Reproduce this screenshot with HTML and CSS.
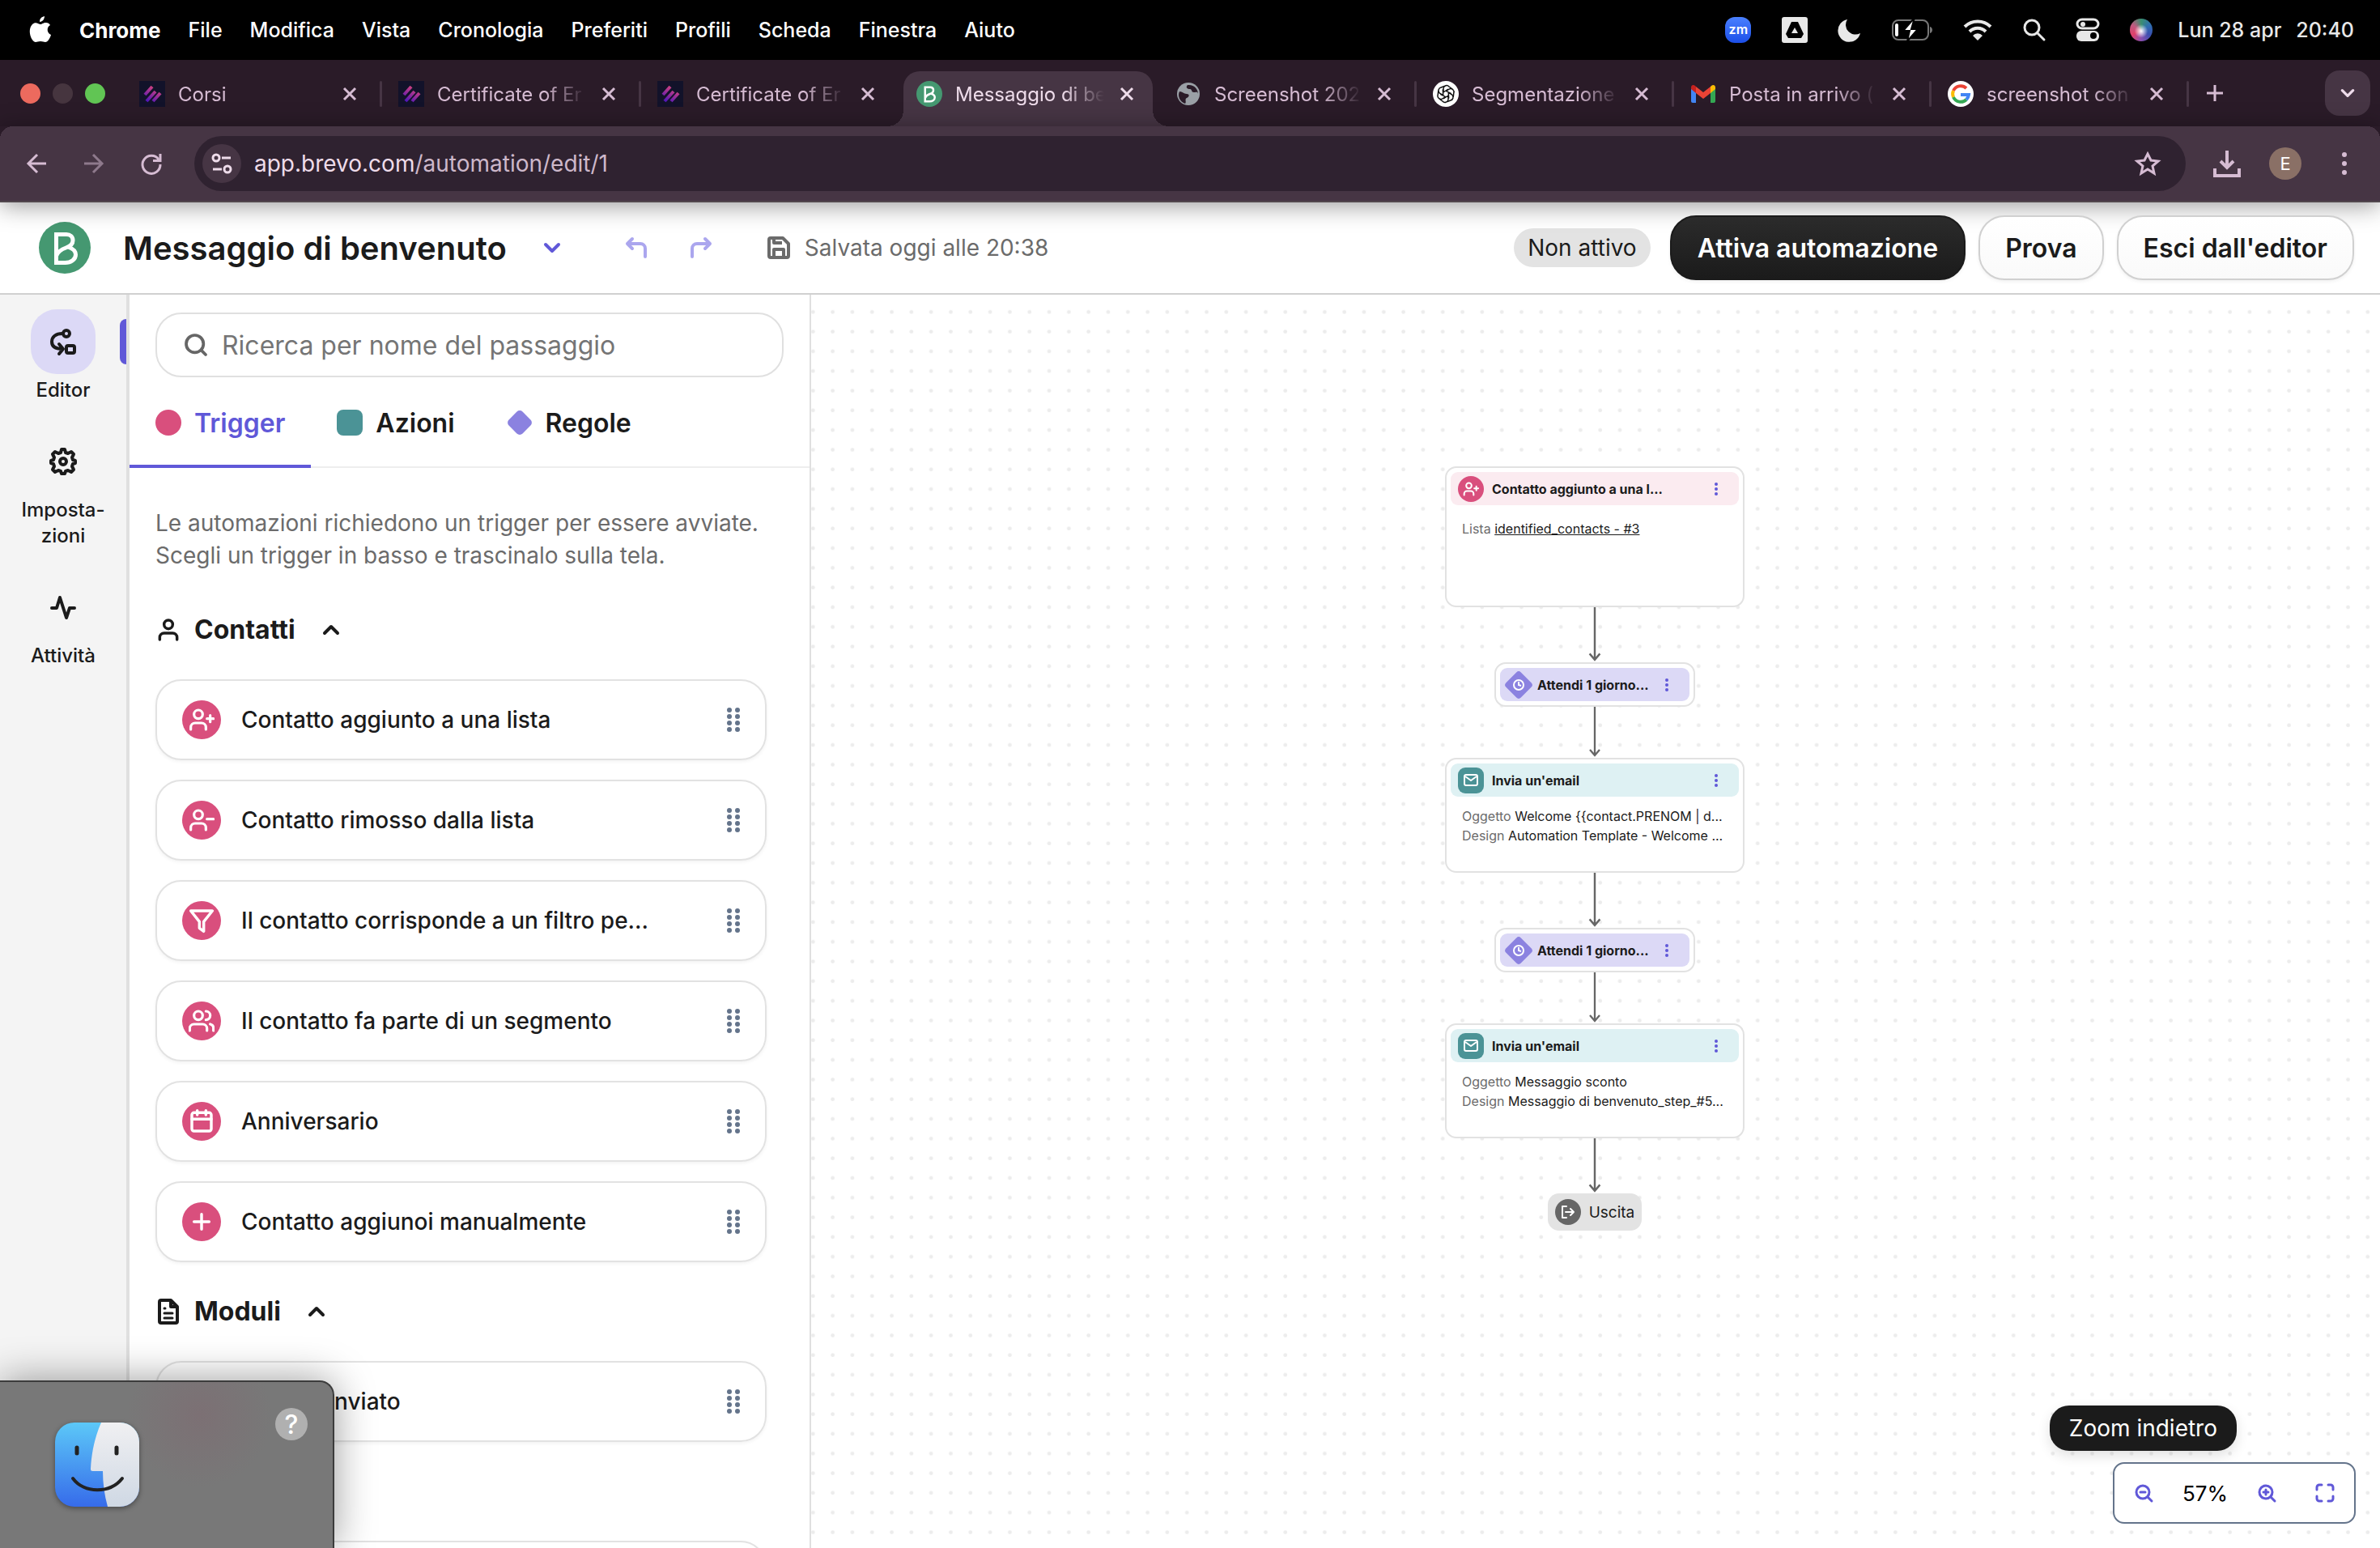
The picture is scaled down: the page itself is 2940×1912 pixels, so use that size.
FILE: index.html
```html
<!DOCTYPE html>
<html lang="it">
<head>
<meta charset="utf-8">
<title>Messaggio di benvenuto</title>
<link rel="stylesheet" href="styles.css">
</head>
<body>
<svg class="defs" aria-hidden="true">
  <defs>
    <linearGradient id="streak" gradientUnits="userSpaceOnUse" x1="7" y1="26" x2="18" y2="6"><stop offset="0" stop-color="#4210c0"/><stop offset="1" stop-color="#d8457c"/></linearGradient>
    <symbol id="i-streak" viewBox="0 0 32 32"><rect width="32" height="32" fill="#12122a"/><g fill="none" stroke="url(#streak)" stroke-width="4"><path d="M7 17 16 7"/><path d="M9 25 20 13"/><path d="M17 25 26 15"/></g></symbol>
    <symbol id="i-brevo" viewBox="0 0 64 64"><circle cx="32" cy="32" r="32" fill="#459871"/><path d="M21.500 50.500V15.500H34C39 15.500 42 18.500 42 23C42 28 38 30.500 33.500 32C29 33.500 24 36 21.500 42M36 31C42 33 45.500 36 45.500 40.500C45.500 46.500 39.500 50.500 32.500 50.500H19" fill="none" stroke="#fff" stroke-width="5"/></symbol>
    <symbol id="i-close" viewBox="0 0 20 20"><path d="M3 3 17 17M17 3 3 17" stroke="currentColor" stroke-width="3" fill="none"/></symbol>
    <symbol id="i-chev" viewBox="0 0 24 24"><path d="M4 8l8 8 8-8" fill="none" stroke="currentColor" stroke-width="4" stroke-linecap="round" stroke-linejoin="round"/></symbol>
    <symbol id="i-user" viewBox="0 0 24 24"><g fill="none" stroke="currentColor" stroke-width="2.600" stroke-linecap="round" stroke-linejoin="round"><circle cx="12" cy="7" r="4"/><path d="M4 21v-2a4 4 0 0 1 4-4h8a4 4 0 0 1 4 4v2"/></g></symbol>
    <symbol id="i-userplus" viewBox="0 0 24 24"><g fill="none" stroke="currentColor" stroke-width="2.400" stroke-linecap="round" stroke-linejoin="round"><circle cx="9" cy="7" r="4"/><path d="M2 21v-2a4 4 0 0 1 4-4h6a4 4 0 0 1 4 4v2M20 8v6M17 11h6"/></g></symbol>
    <symbol id="i-userminus" viewBox="0 0 24 24"><g fill="none" stroke="currentColor" stroke-width="2.400" stroke-linecap="round" stroke-linejoin="round"><circle cx="9" cy="7" r="4"/><path d="M2 21v-2a4 4 0 0 1 4-4h6a4 4 0 0 1 4 4v2M17 11h6"/></g></symbol>
    <symbol id="i-users" viewBox="0 0 24 24"><g fill="none" stroke="currentColor" stroke-width="2.400" stroke-linecap="round" stroke-linejoin="round"><circle cx="9" cy="7" r="4"/><path d="M1 21v-2a4 4 0 0 1 4-4h8a4 4 0 0 1 4 4v2M23 21v-2a4 4 0 0 0-3-4M16 3a4 4 0 0 1 0 8"/></g></symbol>
    <symbol id="i-filter" viewBox="0 0 24 24"><path d="M22 3H2l8 10v6l4 3v-9z" fill="none" stroke="currentColor" stroke-width="2.600" stroke-linejoin="round"/></symbol>
    <symbol id="i-cal" viewBox="0 0 24 24"><g fill="none" stroke="currentColor" stroke-width="2.600" stroke-linecap="round" stroke-linejoin="round"><rect x="3" y="4" width="18" height="17" rx="2"/><path d="M8 2v4M16 2v4M3 10h18"/></g></symbol>
    <symbol id="i-plus" viewBox="0 0 24 24"><path d="M12 5v14M5 12h14" fill="none" stroke="currentColor" stroke-width="2.600" stroke-linecap="round"/></symbol>
    <symbol id="i-grip" viewBox="0 0 16 32"><g fill="#64748b"><circle cx="3" cy="4" r="3"/><circle cx="13" cy="4" r="3"/><circle cx="3" cy="12" r="3"/><circle cx="13" cy="12" r="3"/><circle cx="3" cy="20" r="3"/><circle cx="13" cy="20" r="3"/><circle cx="3" cy="28" r="3"/><circle cx="13" cy="28" r="3"/></g></symbol>
    <symbol id="i-mail" viewBox="0 0 20 20"><g fill="none" stroke="#fff" stroke-width="2" stroke-linejoin="round"><rect x="2" y="3" width="16" height="13" rx="2"/><path d="M3 5l7 5 7-5"/></g></symbol>
    <symbol id="i-dots" viewBox="0 0 6 18"><g fill="currentColor"><circle cx="3" cy="3" r="2"/><circle cx="3" cy="9" r="2"/><circle cx="3" cy="15" r="2"/></g></symbol>
    <symbol id="i-wait" viewBox="0 0 36 36"><rect x="5" y="5" width="26" height="26" rx="4" fill="#8b82e0" transform="rotate(45 18 18)"/><circle cx="18" cy="18" r="6" fill="none" stroke="#fff" stroke-width="2"/><path d="M18 14v4l3 1" fill="none" stroke="#fff" stroke-width="2"/></symbol>
    <symbol id="i-arrow" viewBox="0 0 16 64" preserveAspectRatio="xMidYMax slice"><path d="M8-10V61M2 54l6 7 6-7" fill="none" stroke="#666" stroke-width="2.300"/></symbol>
    <symbol id="i-search" viewBox="0 0 24 24"><g fill="none" stroke="currentColor" stroke-width="2.800" stroke-linecap="round"><circle cx="11" cy="11" r="8"/><path d="M21 21l-4-4"/></g></symbol>
  </defs>
</svg>

<nav class="menubar" aria-label="Menu">
  <svg class="apple" width="28" height="34" viewBox="0 0 28 34"><path d="M19 0c0 3-2 7-6 7 0-4 2-6 6-7zM14 10c2 0 3-2 7-2 2 0 4 1 5 3-5 3-4 10 1 12-1 4-4 9-7 9-2 0-3-1-6-1s-4 1-6 1C3 32-3 17 4 10c4-4 8 0 10 0z" fill="#fff"/></svg>
  <span class="app">Chrome</span><span>File</span><span>Modifica</span><span>Vista</span><span>Cronologia</span><span>Preferiti</span><span>Profili</span><span>Scheda</span><span>Finestra</span><span>Aiuto</span>
  <div class="status">
    <span class="zm">zm</span>
    <svg width="32" height="32" viewBox="0 0 32 32"><rect width="32" height="32" rx="3" fill="#e8e8e8"/><path d="M12 6h8l7 15-3 5H8l-3-5z" fill="#000"/><path d="M16 13l4 7h-8z" fill="#e8e8e8"/></svg>
    <svg width="28" height="28" viewBox="0 0 28 28"><path d="M11 1a12 12 0 0 0 16 17A14 14 0 1 1 11 1z" fill="#e8e8e8"/></svg>
    <svg width="50" height="26" viewBox="0 0 50 26"><rect x="1" y="1" width="44" height="24" rx="7" fill="none" stroke="#777" stroke-width="2"/><rect x="4" y="5" width="4" height="16" rx="2" fill="#fff"/><path d="M47 9c4 1 4 7 0 8z" fill="#777"/><path d="M28-2 14 14h8l-3 13 13-15h-8z" fill="#fff" stroke="#000" stroke-width="2"/></svg>
    <svg width="36" height="26" viewBox="0 0 36 26"><g fill="none" stroke="#e8e8e8" stroke-width="4"><path d="M2 9a23 23 0 0 1 32 0M8 15a14 14 0 0 1 20 0"/></g><path d="M12 20a8 8 0 0 1 12 0l-6 6z" fill="#e8e8e8"/></svg>
    <svg width="28" height="28" viewBox="0 0 28 28"><circle cx="11" cy="11" r="9" fill="none" stroke="#e8e8e8" stroke-width="3"/><path d="M18 18l8 8" stroke="#e8e8e8" stroke-width="3" stroke-linecap="round"/></svg>
    <svg width="28" height="28" viewBox="0 0 28 28"><rect x="1" y="1" width="26" height="11" rx="6" fill="none" stroke="#e8e8e8" stroke-width="3"/><circle cx="8" cy="7" r="3" fill="#e8e8e8"/><rect y="15" width="28" height="13" rx="6" fill="#e8e8e8"/><circle cx="21" cy="21" r="4" fill="#000"/></svg>
    <span class="siri"></span>
    <span class="clock"><span>Lun 28 apr</span><span>20:40</span></span>
  </div>
</nav>

<div class="tabstrip">
  <div class="lights"><i class="red"></i><i class="off"></i><i class="green"></i></div>
  <div class="tabs">
    <div class="tab"><svg class="fav"><use href="#i-streak"/></svg><span>Corsi</span><button aria-label="Chiudi"><svg><use href="#i-close"/></svg></button></div>
    <div class="tab"><svg class="fav"><use href="#i-streak"/></svg><span>Certificate of Er</span><button aria-label="Chiudi"><svg><use href="#i-close"/></svg></button></div>
    <div class="tab bare"><svg class="fav"><use href="#i-streak"/></svg><span>Certificate of Er</span><button aria-label="Chiudi"><svg><use href="#i-close"/></svg></button></div>
    <div class="tab active"><svg class="fav"><use href="#i-brevo"/></svg><span>Messaggio di be</span><button aria-label="Chiudi"><svg><use href="#i-close"/></svg></button></div>
    <div class="tab"><svg class="fav" viewBox="0 0 32 32"><circle cx="16" cy="16" r="14" fill="#9aa0a6"/><path d="M5 13c4 0 5 3 9 3s3 4 0 5 0 5-2 7C6 26 2 19 5 13zM15 5c-3 3 0 5 3 5s1 4 5 4 4-1 5 2c0-6-5-12-13-11z" fill="#2a1b28"/></svg><span>Screenshot 202</span><button aria-label="Chiudi"><svg><use href="#i-close"/></svg></button></div>
    <div class="tab"><svg class="fav" viewBox="0 0 32 32"><circle cx="16" cy="16" r="16" fill="#fff"/><g fill="none" stroke="#111" stroke-width="1.500"><path id="petal" d="M13 14V9a4 4 0 0 1 7-2l4 3M13 14l6-4"/><use href="#petal" transform="rotate(60 16 16)"/><use href="#petal" transform="rotate(120 16 16)"/><use href="#petal" transform="rotate(180 16 16)"/><use href="#petal" transform="rotate(240 16 16)"/><use href="#petal" transform="rotate(300 16 16)"/></g></svg><span>Segmentazione</span><button aria-label="Chiudi"><svg><use href="#i-close"/></svg></button></div>
    <div class="tab"><svg class="fav" viewBox="0 0 32 32"><path d="M1 8v17a2 2 0 0 0 2 2h4V13z" fill="#4285f4"/><path d="M31 8v17a2 2 0 0 1-2 2h-4V13z" fill="#34a853"/><path d="M25 7v8l6-5V8c0-3-3-4-5-2z" fill="#fbbc04"/><path d="M7 15V7l9 7 9-7v8l-9 7z" fill="#ea4335"/><path d="M1 8v2l6 5V7L6 6C4 4 1 5 1 8z" fill="#c5221f"/></svg><span>Posta in arrivo (</span><button aria-label="Chiudi"><svg><use href="#i-close"/></svg></button></div>
    <div class="tab"><svg class="fav" viewBox="0 0 32 32"><circle cx="16" cy="16" r="16" fill="#fff"/><g fill="none" stroke-width="4"><path d="M23 9a10 10 0 0 0-16 3" stroke="#ea4335"/><path d="M7 12a10 10 0 0 0 0 8" stroke="#fbbc04"/><path d="M7 20a10 10 0 0 0 16 3" stroke="#34a853"/><path d="M23 23a10 10 0 0 0 3-6H16" stroke="#4285f4"/></g></svg><span>screenshot con</span><button aria-label="Chiudi"><svg><use href="#i-close"/></svg></button></div>
  </div>
  <button class="newtab" aria-label="Nuova scheda"><svg width="24" height="24" viewBox="0 0 24 24"><path d="M12 2v20M2 12h20" stroke="currentColor" stroke-width="3"/></svg></button>
  <button class="tabsearch" aria-label="Cerca schede"><svg width="20" height="20"><use href="#i-chev"/></svg></button>
</div>

<div class="toolbar">
  <button aria-label="Indietro"><svg width="24" height="24" viewBox="0 0 24 24"><path d="M24 12H2M13 1 2 12l11 11" fill="none" stroke="currentColor" stroke-width="3"/></svg></button>
  <button class="dim" aria-label="Avanti"><svg width="24" height="24" viewBox="0 0 24 24"><path d="M0 12h22M11 1l11 11-11 11" fill="none" stroke="currentColor" stroke-width="3"/></svg></button>
  <button aria-label="Ricarica"><svg width="26" height="26" viewBox="0 0 26 26"><path d="M22 8A11 11 0 1 0 24 14" fill="none" stroke="currentColor" stroke-width="3"/><path d="M24 1v8.500h-9" fill="none" stroke="currentColor" stroke-width="3"/></svg></button>
  <div class="omnibox">
    <span class="chip"><svg width="26" height="26" viewBox="0 0 26 26"><g fill="none" stroke="currentColor" stroke-width="3"><circle cx="6" cy="6" r="4"/><path d="M13 6h11M2 20h11"/><circle cx="20" cy="20" r="4"/></g></svg></span>
    <span class="url">app.brevo.com<span>/automation/edit/1</span></span>
    <svg class="star" width="30" height="30" viewBox="0 0 30 30"><path d="M15 3l4 8 9 1-7 6 2 9-8-5-8 5 2-9-7-6 9-1z" fill="none" stroke="currentColor" stroke-width="3"/></svg>
  </div>
  <button class="dl" aria-label="Download"><svg width="34" height="34" viewBox="0 0 34 34"><path d="M17 1v20M9 14l8 8 8-8M2 23v9h30v-9" fill="none" stroke="currentColor" stroke-width="4"/></svg></button>
  <span class="avatar">E</span>
  <button class="kebab" aria-label="Menu"><svg width="8" height="30" viewBox="0 0 8 30"><g fill="currentColor"><circle cx="4" cy="4" r="3"/><circle cx="4" cy="15" r="3"/><circle cx="4" cy="26" r="3"/></g></svg></button>
</div>

<header class="pagehead">
  <svg class="logo"><use href="#i-brevo"/></svg>
  <h1>Messaggio di benvenuto</h1>
  <button class="more" aria-label="Altro"><svg width="24" height="24"><use href="#i-chev"/></svg></button>
  <button class="undo" aria-label="Annulla"><svg width="28" height="28" viewBox="0 0 28 28"><path d="M9 3 3 9l6 6M3 9h16a6 6 0 0 1 6 6v10" fill="none" stroke="currentColor" stroke-width="4" stroke-linecap="round" stroke-linejoin="round"/></svg></button>
  <button class="redo" aria-label="Ripeti"><svg width="28" height="28" viewBox="0 0 28 28"><path d="M19 3l6 6-6 6M25 9H9a6 6 0 0 0-6 6v10" fill="none" stroke="currentColor" stroke-width="4" stroke-linecap="round" stroke-linejoin="round"/></svg></button>
  <p class="saved"><svg width="28" height="28" viewBox="0 0 28 28"><g fill="none" stroke="currentColor" stroke-width="4" stroke-linejoin="round"><path d="M2 4a2 2 0 0 1 2-2h15l7 7v15a2 2 0 0 1-2 2H4a2 2 0 0 1-2-2z"/><path d="M8 26V16h12v10M8 3v5h10"/></g></svg>Salvata oggi alle 20:38</p>
  <span class="badge">Non attivo</span>
  <button class="btn dark">Attiva automazione</button>
  <button class="btn">Prova</button>
  <button class="btn">Esci dall'editor</button>
</header>

<main class="workspace">
  <nav class="rail" aria-label="Sezioni">
    <a class="on" href="#editor"><span class="tile"><svg width="34" height="34" viewBox="0 0 34 34"><g fill="none" stroke="currentColor" stroke-width="4" stroke-linecap="round" stroke-linejoin="round"><circle cx="21" cy="7" r="4"/><path d="M16 7C8 7 3 11 3 17s4 9 13 9M12 20l5 6-5 6"/><rect x="21" y="22" width="10" height="9" rx="2"/></g></svg></span>Editor</a>
    <a href="#impostazioni"><span class="tile"><svg width="34" height="34" viewBox="0 0 34 34"><g fill="none" stroke="currentColor" stroke-width="4" stroke-linejoin="round"><path d="M14 6l1-4h4l1 4 3 1 4-2 3 3-2 4 1 3 3 1v3l-3 1-1 3 2 4-3 3-4-2-3 1-1 3h-4l-1-3-3-1-4 2-3-3 2-4-1-3-3-1v-3l3-1 1-3-2-4 3-3 4 2z"/><circle cx="17" cy="17" r="4"/></g></svg></span>Imposta-<br>zioni</a>
    <a href="#attivita"><span class="tile"><svg width="32" height="32" viewBox="0 0 32 32"><path d="M2 17h6l4-13 8 25 4-12h6" fill="none" stroke="currentColor" stroke-width="4" stroke-linecap="round" stroke-linejoin="round"/></svg></span>Attività</a>
  </nav>

  <section class="panel">
    <label class="search"><svg width="32" height="32"><use href="#i-search"/></svg><input type="text" placeholder="Ricerca per nome del passaggio" aria-label="Ricerca per nome del passaggio"></label>
    <div class="kinds">
      <button class="on"><i class="dot"></i>Trigger</button>
      <button><i class="sq"></i>Azioni</button>
      <button><svg class="dia" viewBox="0 0 32 32"><rect x="4" y="4" width="24" height="24" rx="5" fill="#8b82e0" transform="rotate(45 16 16)"/></svg>Regole</button>
    </div>
    <div class="list">
      <p class="hint">Le automazioni richiedono un trigger per essere avviate. Scegli un trigger in basso e trascinalo sulla tela.</p>
      <h2><svg width="32" height="32"><use href="#i-user"/></svg>Contatti<svg class="up" width="24" height="24"><use href="#i-chev"/></svg></h2>
      <div class="cards">
        <div class="card"><span class="ico"><svg><use href="#i-userplus"/></svg></span><span class="name">Contatto aggiunto a una lista</span><svg class="grip"><use href="#i-grip"/></svg></div>
        <div class="card"><span class="ico"><svg><use href="#i-userminus"/></svg></span><span class="name">Contatto rimosso dalla lista</span><svg class="grip"><use href="#i-grip"/></svg></div>
        <div class="card"><span class="ico"><svg><use href="#i-filter"/></svg></span><span class="name">Il contatto corrisponde a un filtro pe...</span><svg class="grip"><use href="#i-grip"/></svg></div>
        <div class="card"><span class="ico"><svg><use href="#i-users"/></svg></span><span class="name">Il contatto fa parte di un segmento</span><svg class="grip"><use href="#i-grip"/></svg></div>
        <div class="card"><span class="ico"><svg><use href="#i-cal"/></svg></span><span class="name">Anniversario</span><svg class="grip"><use href="#i-grip"/></svg></div>
        <div class="card"><span class="ico"><svg><use href="#i-plus"/></svg></span><span class="name">Contatto aggiunoi manualmente</span><svg class="grip"><use href="#i-grip"/></svg></div>
      </div>
      <h2><svg width="32" height="32" viewBox="0 0 32 32"><g fill="none" stroke="currentColor" stroke-width="4" stroke-linejoin="round" stroke-linecap="round"><path d="M5 4a2 2 0 0 1 2-2h12l8 8v18a2 2 0 0 1-2 2H7a2 2 0 0 1-2-2zM19 3v7h7"/><path d="M11 12h1M11 18h10M11 24h10" stroke-width="3"/></g></svg>Moduli<svg class="up" width="24" height="24"><use href="#i-chev"/></svg></h2>
      <div class="cards spaced">
        <div class="card"><span class="ico"></span><span class="name">Modulo inviato</span><svg class="grip"><use href="#i-grip"/></svg></div>
        <div class="card"></div>
      </div>
    </div>
  </section>

  <section class="canvas">
    <svg class="grid" aria-hidden="true"><defs><pattern id="grid" x="-10" y="9" width="24.31" height="24.31" patternUnits="userSpaceOnUse"><circle cx="12.300" cy="12.300" r="2.400" fill="#ececec"/></pattern></defs><rect width="100%" height="100%" fill="url(#grid)"/></svg>
    <div class="flow">
      <article class="node tall">
        <div class="bar pink"><span class="mark round"><svg><use href="#i-userplus"/></svg></span><b>Contatto aggiunto a una l...</b><button aria-label="Opzioni"><svg><use href="#i-dots"/></svg></button></div>
        <p><span>Lista</span> <a href="#lista">identified_contacts - #3</a></p>
      </article>
      <svg class="arrow"><use href="#i-arrow"/></svg>
      <article class="wait"><div class="bar lilac"><svg class="clock-mark"><use href="#i-wait"/></svg><b>Attendi 1 giorno...</b><button aria-label="Opzioni"><svg><use href="#i-dots"/></svg></button></div></article>
      <svg class="arrow short"><use href="#i-arrow"/></svg>
      <article class="node">
        <div class="bar teal"><span class="mark"><svg><use href="#i-mail"/></svg></span><b>Invia un'email</b><button aria-label="Opzioni"><svg><use href="#i-dots"/></svg></button></div>
        <p><span>Oggetto</span> Welcome {{contact.PRENOM | d...<br><span>Design</span> Automation Template - Welcome ...</p>
      </article>
      <svg class="arrow"><use href="#i-arrow"/></svg>
      <article class="wait"><div class="bar lilac"><svg class="clock-mark"><use href="#i-wait"/></svg><b>Attendi 1 giorno...</b><button aria-label="Opzioni"><svg><use href="#i-dots"/></svg></button></div></article>
      <svg class="arrow short"><use href="#i-arrow"/></svg>
      <article class="node">
        <div class="bar teal"><span class="mark"><svg><use href="#i-mail"/></svg></span><b>Invia un'email</b><button aria-label="Opzioni"><svg><use href="#i-dots"/></svg></button></div>
        <p><span>Oggetto</span> Messaggio sconto<br><span>Design</span> Messaggio di benvenuto_step_#5...</p>
      </article>
      <svg class="arrow"><use href="#i-arrow"/></svg>
      <div class="exit"><svg width="32" height="32" viewBox="0 0 32 32"><circle cx="16" cy="16" r="16" fill="#666"/><path d="M14 9H9v14h5M13 16h10M19 12l4 4-4 4" fill="none" stroke="#fff" stroke-width="2" stroke-linecap="round" stroke-linejoin="round"/></svg>Uscita</div>
    </div>
    <div class="zoom">
      <div class="tip" role="tooltip">Zoom indietro</div>
      <div class="controls">
        <button aria-label="Zoom indietro"><svg width="24" height="24" viewBox="0 0 24 24"><g fill="none" stroke="currentColor" stroke-width="3" stroke-linecap="round"><circle cx="11" cy="11" r="8"/><path d="M17 17l5 5M8 11h6"/></g></svg></button>
        <span>57%</span>
        <button aria-label="Zoom avanti"><svg width="24" height="24" viewBox="0 0 24 24"><g fill="none" stroke="currentColor" stroke-width="3" stroke-linecap="round"><circle cx="11" cy="11" r="8"/><path d="M17 17l5 5M8 11h6M11 8v6"/></g></svg></button>
        <button class="fit" aria-label="Adatta"><svg width="24" height="24" viewBox="0 0 24 24"><path d="M2 8V5a3 3 0 0 1 3-3h3M16 2h3a3 3 0 0 1 3 3v3M22 16v3a3 3 0 0 1-3 3h-3M8 22H5a3 3 0 0 1-3-3v-3" fill="none" stroke="currentColor" stroke-width="3" stroke-linecap="round"/></svg></button>
      </div>
    </div>
  </section>
</main>

<aside class="dock">
  <svg class="finder" viewBox="0 0 104 104"><defs><linearGradient id="fb" x1="0" y1="0" x2="0" y2="1"><stop offset="0" stop-color="#5cc8f8"/><stop offset="1" stop-color="#366bea"/></linearGradient><linearGradient id="fw" x1="0" y1="0" x2="0" y2="1"><stop offset="0" stop-color="#f0f0f2"/><stop offset="1" stop-color="#cfd8e4"/></linearGradient><clipPath id="fc"><rect width="104" height="104" rx="24"/></clipPath></defs><g clip-path="url(#fc)"><rect width="104" height="104" fill="url(#fb)"/><path d="M57 0C49 18 45 38 44 57c0 3 1 3 4 3h11c0 15 2 30 6 44h39V0z" fill="url(#fw)"/></g><path d="M27 31v7M76 31v7" stroke="#222" stroke-width="5" stroke-linecap="round"/><path d="M22 69c14 19 46 19 61 0" fill="none" stroke="#222" stroke-width="4" stroke-linecap="round"/></svg>
  <button aria-label="Aiuto">?</button>
</aside>
</body>
</html>
```
FILE: styles.css
```css
* { box-sizing: border-box; }
html, body { height: 100%; }
body {
  margin: 0;
  display: flex;
  flex-direction: column;
  position: relative;
  overflow: hidden;
  font-family: Inter, "Liberation Sans", sans-serif;
  font-size: 28px;
  color: #1b1b1b;
  background: #fff;
}
button { font: inherit; color: inherit; background: none; border: 0; padding: 0; display: flex; align-items: center; justify-content: center; flex: none; }
svg { flex: none; display: block; overflow: visible; }
h1, h2, p { margin: 0; }
a { color: inherit; }
.defs { position: absolute; width: 0; height: 0; }

/* System menu bar */
.menubar { flex: none; height: 74px; background: #000; color: #fff; display: flex; align-items: center; gap: 34px; padding: 0 32px 0 36px; font-size: 25px; font-weight: 500; white-space: nowrap; }
.menubar .app { font-size: 26px; font-weight: 700; }
.status { margin-left: auto; display: flex; align-items: center; gap: 38px; color: #e8e8e8; }
.zm { width: 32px; height: 32px; border-radius: 12px; background: linear-gradient(#4a80ff, #1c4fe8); color: #fff; font-size: 16px; line-height: 30px; font-weight: 600; text-align: center; }
.siri { width: 28px; height: 28px; border-radius: 50%; background: radial-gradient(circle at 50% 55%, #fff 0, transparent 40%), conic-gradient(#3a8f70, #2f6fb0, #3a4fb0, #8a50b0, #e0406a, #c05a80, #3a8f70); }
.clock { display: flex; gap: 18px; margin-left: -7px; }

/* Browser tab strip */
.tabstrip { flex: none; height: 82px; background: #2a1b28; color: #d6bcd3; display: flex; align-items: center; padding: 0 12px 0 25px; font-size: 24px; }
.lights { display: flex; gap: 15px; width: 127px; }
.lights i { width: 25px; height: 25px; border-radius: 50%; }
.red { background: #ec6a5e; }
.off { background: #46353f; }
.green { background: #61c554; }
.tabs { flex: 1; display: grid; grid-template-columns: repeat(4, 320fr) repeat(4, 318fr); align-self: stretch; padding-top: 14px; }
.tab { display: flex; align-items: center; min-width: 0; height: 56px; padding: 0 30px 0 20px; position: relative; }
.fav { width: 32px; height: 32px; margin-right: 16px; }
.tab > span { flex: 1; min-width: 0; white-space: nowrap; margin-right: 18px; mask-image: linear-gradient(to right, #000 72%, transparent); }
.tab svg:not(.fav) { width: 20px; height: 20px; }
.tab::after { content: ""; position: absolute; right: 0; top: 12px; width: 3px; height: 32px; background: #463544; border-radius: 2px; }
.tab.bare::after { display: none; }
.tab.active { color: #eedcea; }
.tab.active::before { content: ""; position: absolute; left: 4px; right: 8px; top: 0; height: 68px; background: #463544; border-radius: 20px 20px 0 0; }
.tab.active::after { left: -16px; right: -12px; top: 48px; width: auto; height: 20px; border-radius: 0; background: radial-gradient(circle at 0 0, transparent 20px, #463544 20px) left / 20px 20px no-repeat, radial-gradient(circle at 100% 0, transparent 20px, #463544 20px) right / 20px 20px no-repeat; }
.tab.active > * { position: relative; }
.newtab { width: 64px; }
.tabsearch { width: 56px; height: 56px; margin-left: 104px; background: #463544; border-radius: 18px; color: #eedcea; }

/* Browser toolbar */
.toolbar { flex: none; height: 94px; border-bottom: 2px solid #51474d; background: radial-gradient(circle at 100% 100%, transparent 16px, #2a1b28 16px) left top / 16px 16px no-repeat, radial-gradient(circle at 0 100%, transparent 16px, #2a1b28 16px) right top / 16px 16px no-repeat, #463544; box-shadow: 0 4px 28px rgba(0, 0, 0, .4); color: #d6bcd3; position: relative; display: flex; align-items: center; padding: 0 28px 0 32px; }
.toolbar > button { width: 26px; }
.toolbar > button + button { margin-left: 45px; }
.dim { opacity: .5; }
.omnibox { flex: 1; height: 68px; border-radius: 34px; background: #2f2230; margin: 0 34px 0 40px; padding: 0 32px 0 10px; display: flex; align-items: center; }
.chip { width: 48px; height: 48px; border-radius: 50%; background: #463544; color: #eedcea; display: flex; align-items: center; justify-content: center; }
.url { flex: 1; margin-left: 16px; color: #eedcea; }
.url span { color: #cdb8ca; }
.toolbar .dl { width: 34px; }
.avatar { width: 40px; height: 40px; border-radius: 50%; margin: 0 49px 0 35px; background: #8a7066; color: #fff; font-size: 22px; line-height: 40px; text-align: center; }
.toolbar .kebab { width: 8px; margin-right: 12px; }

/* Page header */
.pagehead { flex: none; height: 114px; border-bottom: 2px solid #d0d0d0; display: flex; align-items: center; padding: 0 32px 0 48px; white-space: nowrap; }
.logo { width: 64px; height: 64px; margin-right: 40px; }
h1 { font-size: 40px; font-weight: 600; }
.more { color: #6058d8; margin-left: 44px; }
.undo, .redo { color: #aba6ee; margin-left: 78px; }
.redo { margin-left: 52px; }
.saved { display: flex; align-items: center; gap: 18px; margin-left: 68px; color: #6b6b6b; }
.badge { margin-left: auto; margin-right: 24px; height: 48px; line-height: 48px; padding: 0 17px; border-radius: 24px; background: #e3e3e3; }
.btn { height: 80px; padding: 0 31px; border: 2px solid #d0d0d0; border-radius: 32px; background: linear-gradient(#fff, #fafafa); box-shadow: 0 2px 4px rgba(0, 0, 0, .06); font-size: 32px; font-weight: 600; margin-left: 16px; position: relative; }
.btn.dark { margin-left: 0; padding: 0 32px; background: linear-gradient(#2b2b2b, #1b1b1b); border-color: #1b1b1b; color: #fff; }

/* Workspace */
.workspace { flex: 1; min-height: 0; display: flex; overflow: hidden; }
.rail { flex: none; width: 160px; background: #f4f4f4; border-right: 4px solid #e0e0e0; padding-top: 18px; display: flex; flex-direction: column; gap: 32px; }
.rail a { display: flex; flex-direction: column; align-items: center; text-align: center; text-decoration: none; font-size: 24px; font-weight: 500; line-height: 32px; position: relative; }
.tile { width: 80px; height: 80px; border-radius: 32px; margin-bottom: 4px; display: flex; align-items: center; justify-content: center; }
.rail .on .tile { background: #dcd9f6; }
.rail .on::after { content: ""; position: absolute; right: 0; top: 12px; width: 8px; height: 56px; border-radius: 8px 0 0 8px; background: #6058d8; }

.panel { flex: none; width: 842px; border-right: 2px solid #e0e0e0; display: flex; flex-direction: column; }
.search { flex: none; margin: 22px 32px 0; height: 80px; border: 2px solid #e0e0e0; border-radius: 32px; display: flex; align-items: center; padding: 0 32px; gap: 16px; color: #666; }
.search input { flex: 1; min-width: 0; border: 0; padding: 0; outline: 0; background: none; font: inherit; font-size: 32px; }
.search input::placeholder { color: #757575; opacity: 1; }
.kinds { flex: none; display: flex; height: 112px; border-bottom: 2px solid #eee; }
.kinds button { height: 112px; padding: 0 32px; gap: 16px; font-size: 32px; font-weight: 600; border: solid transparent; border-width: 4px 0; }
.kinds .on { color: #6058d8; border-bottom-color: #6058d8; }
.dot, .sq, .dia { width: 32px; height: 32px; }
.dot { border-radius: 50%; background: #d94f7d; }
.sq { border-radius: 8px; background: #4b9396; }
.list { padding: 48px 53px 0 32px; min-height: 0; }
.hint { color: #6b6b6b; line-height: 40px; white-space: normal; margin-right: -40px; }
h2 { display: flex; align-items: center; font-size: 32px; font-weight: 700; line-height: 40px; gap: 16px; margin: 52px 0 41px; }
.up { transform: rotate(180deg); margin-left: 16px; }
.cards { display: flex; flex-direction: column; gap: 24px; }
.cards + h2 { margin-top: 41px; }
.spaced { gap: 122px; }
.card { flex: none; height: 100px; border: 2px solid #e2e2e2; border-radius: 32px; box-shadow: 0 2px 4px rgba(0, 0, 0, .05); display: flex; align-items: center; padding: 0 31px; font-weight: 500; }
.ico { width: 48px; height: 48px; border-radius: 50%; background: #d94f7d; color: #fff; display: flex; align-items: center; justify-content: center; margin-right: 25px; }
.ico svg { width: 32px; height: 32px; }
.name { flex: 1; white-space: nowrap; }
.grip { width: 16px; height: 32px; }

/* Canvas */
.canvas { flex: 1; min-width: 0; position: relative; overflow: hidden; }
.grid { position: absolute; inset: 0; width: 100%; height: 100%; }
.flow { position: relative; display: flex; flex-direction: column; align-items: center; padding: 212px 2px 0 0; font-size: 16px; }
.node, .wait { background: #fff; border: 2px solid #e2e2e2; border-radius: 14px; padding: 5px; }
.node { width: 370px; height: 142px; }
.node.tall { height: 174px; }
.wait { width: 248px; height: 55px; }
.bar { height: 41px; border-radius: 9px; display: flex; align-items: center; padding: 0 25px 0 9px; white-space: nowrap; }
.bar b { flex: 1; font-weight: 700; }
.bar button svg { width: 6px; height: 18px; color: #6058d8; }
.pink { background: #fbebf0; }
.teal { background: #def1f3; }
.lilac { background: #dcd9f6; padding-left: 5px; }
.mark { width: 32px; height: 32px; border-radius: 9px; background: #4b9396; color: #fff; display: flex; align-items: center; justify-content: center; margin-right: 10px; }
.mark.round { border-radius: 50%; background: #d94f7d; }
.mark svg { width: 20px; height: 20px; }
.clock-mark { width: 36px; height: 36px; margin-right: 5px; }
.node p { padding: 12px 14px; line-height: 24px; white-space: nowrap; }
.node.tall p { padding-top: 17px; }
.node p span { color: #6b6b6b; }
.arrow { width: 16px; height: 68px; overflow: hidden; }
.short { height: 63px; }
.exit { height: 46px; padding: 0 9px; border-radius: 14px; background: #e3e3e3; font-size: 19px; display: flex; align-items: center; gap: 10px; }

.zoom { position: absolute; right: 30px; bottom: 30px; display: flex; flex-direction: column; align-items: flex-end; gap: 14px; }
.tip { height: 56px; line-height: 56px; padding: 0 24px; border-radius: 24px; margin-right: 147px; background: #1b1b1b; color: #fff; box-shadow: 0 6px 16px rgba(0, 0, 0, .12); }
.controls { width: 300px; height: 76px; border: 2px solid #64748b; border-radius: 14px; background: #fff; display: flex; align-items: center; justify-content: space-between; padding: 0 24px; font-size: 26px; color: #000; }
.controls button { color: #6058d8; }
.controls .fit { margin-left: 12px; }

/* Floating window over the lower left corner */
.dock { position: absolute; left: 0; bottom: 0; width: 413px; height: 207px; background: radial-gradient(circle at 60% 20%, #7c7074, #787878 30%); border-top: 2px solid #3c3c3c; border-right: 2px solid #3c3c3c; border-radius: 0 18px 0 0; box-shadow: 0 0 50px rgba(0, 0, 0, .4); display: flex; justify-content: space-between; align-items: flex-start; padding: 32px 31px 0 68px; }
.finder { width: 104px; height: 104px; margin-top: 18px; filter: drop-shadow(0 2px 3px rgba(0, 0, 0, .4)); }
.dock button { width: 40px; height: 40px; border-radius: 50%; background: #b0b0b0; color: #fff; font-size: 32px; font-weight: 500; }
```
